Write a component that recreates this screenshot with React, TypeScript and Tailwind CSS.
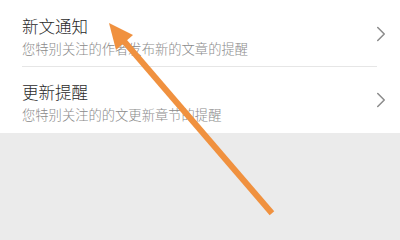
import { ChevronRight } from 'lucide-react'

type Item = { title: string; desc: string }

const items: Item[] = [
  { title: '新文通知', desc: '您特别关注的作者发布新的文章的提醒' },
  { title: '更新提醒', desc: '您特别关注的的文更新章节的提醒' },
]

const font = "font-['Noto_Sans_CJK_SC','Noto_Sans',sans-serif]"

function Row({ item, first }: { item: Item; first: boolean }) {
  return (
    <div className={`flex items-center pl-[22px] pr-[6px] ${first ? 'pt-[15px] pb-[7px]' : 'pt-[14px] pb-[8px]'}`}>
      <div className="flex-1 min-w-0">
        <div className="text-[16.5px] leading-[22px] font-light text-[#2a2a2a]">{item.title}</div>
        <div className="mt-[2px] text-[13.3px] leading-[20px] font-light text-[#8a8a8a]">{item.desc}</div>
      </div>
      <ChevronRight className="w-[26px] h-[26px] -mt-[7px] text-[#8c8c8c]" strokeWidth={1.4} />
    </div>
  )
}

export default function App() {
  return (
    <div className={`relative w-[400px] h-[240px] bg-[#ebebeb] overflow-hidden ${font}`}>
      <div className="bg-white h-[133px]">
        <Row item={items[0]} first />
        <div className="ml-[22px] mr-[23px] h-px bg-[#e6e6e6]" />
        <Row item={items[1]} first={false} />
      </div>

      {/* 注釈の矢印 */}
      <svg className="absolute inset-0 pointer-events-none" width="400" height="240" viewBox="0 0 400 240">
        <line x1="270" y1="211" x2="123" y2="40" stroke="#f0913f" strokeWidth="6" strokeLinecap="square" />
        <polygon points="109,23 133,35 116,50" fill="#f0913f" />
      </svg>
    </div>
  )
}
